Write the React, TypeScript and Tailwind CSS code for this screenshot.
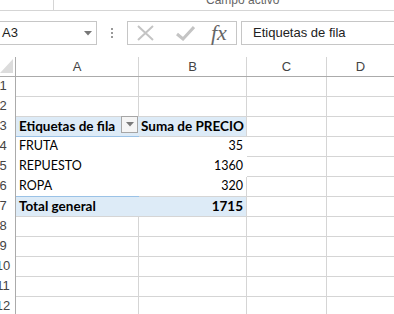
const font = { fontFamily: '"Lato", "Liberation Sans", sans-serif' };

type Cell = { a?: string; b?: string; kind?: 'head' | 'body' | 'total' };

const rows: Cell[] = [
  {},
  {},
  { a: 'Etiquetas de fila', b: 'Suma de PRECIO', kind: 'head' },
  { a: 'FRUTA', b: '35', kind: 'body' },
  { a: 'REPUESTO', b: '1360', kind: 'body' },
  { a: 'ROPA', b: '320', kind: 'body' },
  { a: 'Total general', b: '1715', kind: 'total' },
  {},
  {},
  {},
  {},
  {},
];

function FilterButton() {
  return (
    <div className="ml-auto mr-[1px] mb-[1px] flex h-[17px] w-[17px] items-center justify-center border border-[#a6a6a6] bg-[#f5f5f5]">
      <svg width="8" height="5" viewBox="0 0 8 5">
        <path d="M0 0 L8 0 L4 4.5 Z" fill="#7a7a7a" />
      </svg>
    </div>
  );
}

export default function App() {
  return (
    <div className="w-[394px] h-[314px] overflow-hidden bg-white text-[#000]" style={font}>
      {/* cinta superior */}
      <div className="relative h-[11px] overflow-hidden border-b border-[#d5d5d5]">
        <div className="absolute left-[53px] top-0 h-full border-l border-[#d5d5d5]" />
        <div className="ml-[206px] -mt-[7px] text-[12px] leading-[14px] text-[#666]" style={{ fontFamily: '"Liberation Sans", sans-serif' }}>
          Campo activo
        </div>
      </div>

      {/* barra de fórmulas */}
      <div className="flex h-[46px] items-start pt-[10px]">
        <div className="flex h-[24px] w-[97px] items-center border border-l-0 border-[#c6c6c6] pl-[2px] pr-[4px]">
          <span className="text-[13px] text-[#222]" style={{ fontFamily: '"Liberation Sans", sans-serif' }}>A3</span>
          <svg className="ml-auto" width="8" height="5" viewBox="0 0 8 5">
            <path d="M0 0 L8 0 L4 4.5 Z" fill="#777" />
          </svg>
        </div>
        <div className="flex h-[24px] w-[30px] flex-col items-center justify-center gap-[2px]">
          <div className="h-[2px] w-[2px] bg-[#999]" />
          <div className="h-[2px] w-[2px] bg-[#999]" />
          <div className="h-[2px] w-[2px] bg-[#999]" />
        </div>
        <div className="flex h-[24px] w-[110px] items-center border border-[#c6c6c6]">
          <svg className="ml-[9px]" width="17" height="16" viewBox="0 0 17 16">
            <path d="M1 1 L16 15 M16 1 L1 15" stroke="#c4c4c4" strokeWidth="2" />
          </svg>
          <svg className="ml-[22px]" width="19" height="15" viewBox="0 0 19 15">
            <path d="M1 8 L7 13 L18 1" stroke="#c4c4c4" strokeWidth="3" fill="none" />
          </svg>
          <span
            className="ml-[16px] text-[22px] italic leading-none text-[#666]"
            style={{ fontFamily: '"Liberation Serif", serif' }}
          >
            fx
          </span>
        </div>
        <div className="ml-[4px] flex h-[24px] flex-1 items-center border border-r-0 border-[#c6c6c6] pl-[11px]">
          <span className="text-[13px] text-[#222]" style={{ fontFamily: '"Liberation Sans", sans-serif' }}>Etiquetas de fila</span>
        </div>
      </div>

      {/* encabezados de columna */}
      <div className="flex h-[20px] border-b border-[#ababab] text-[13px] text-[#444]" style={{ fontFamily: '"Liberation Sans", sans-serif' }}>
        <div className="relative w-[16px] border-r border-[#ababab]">
          <svg className="absolute left-0 top-[1px]" width="14" height="16" viewBox="0 0 14 16">
            <path d="M13 1 L13 15 L0 15 Z" fill="#dcdcdc" />
          </svg>
        </div>
        <div className="flex w-[123px] items-center justify-center border-r border-[#d5d5d5]">A</div>
        <div className="flex w-[108px] items-center justify-center border-r border-[#d5d5d5]">B</div>
        <div className="flex w-[80px] items-center justify-center border-r border-[#d5d5d5]">C</div>
        <div className="flex flex-1 items-center justify-center">D</div>
      </div>

      {/* filas */}
      {rows.map((r, i) => {
        const pivot = r.kind !== undefined;
        const blue = r.kind === 'head' || r.kind === 'total';
        const text = blue ? 'font-bold text-[13.5px]' : 'text-[12.5px]';
        const bottom =
          r.kind === 'head'
            ? 'border-b border-[#9bc2e6]'
            : r.kind === 'body' && i === 5
            ? 'border-b border-[#9bc2e6]'
            : r.kind === 'body'
            ? 'border-b border-white'
            : 'border-b border-[#d5d5d5]';
        return (
          <div key={i} className="flex h-[20px] text-[13px]">
            <div className="w-[16px] overflow-hidden border-r border-[#ababab]">
              <div
                className="-ml-[9px] flex h-[20px] w-[24px] items-end justify-center pb-[2px] text-[#444]"
                style={{ fontFamily: '"Liberation Sans", sans-serif' }}
              >
                {i + 1}
              </div>
            </div>
            <div
              className={`flex w-[123px] items-end pb-[2px] pl-[3px] ${bottom} ${
                pivot ? '' : 'border-r border-[#d5d5d5]'
              } ${blue ? 'bg-[#ddebf7]' : ''} ${text}`}
            >
              <span className="leading-[16px]">{r.a}</span>
              {r.kind === 'head' && <FilterButton />}
            </div>
            <div
              className={`flex w-[108px] items-end border-r border-[#d5d5d5] pb-[2px] pr-[3px] ${bottom} ${
                blue ? 'bg-[#ddebf7]' : ''
              } ${text} ${r.kind === 'head' ? 'justify-start pl-[2px]' : 'justify-end'}`}
            >
              <span className="leading-[16px] whitespace-nowrap">{r.b}</span>
            </div>
            <div className="w-[80px] border-b border-r border-[#d5d5d5]" />
            <div className="flex-1 border-b border-[#d5d5d5]" />
          </div>
        );
      })}
    </div>
  );
}
